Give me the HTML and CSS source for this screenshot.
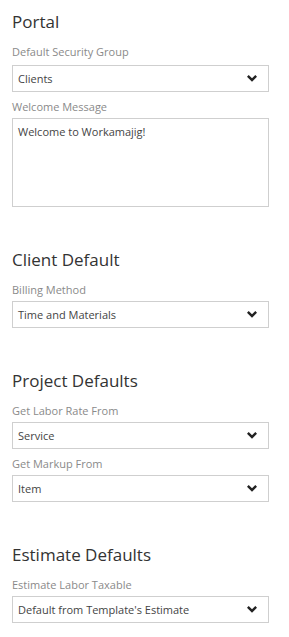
FILE: index.html
```html
<!DOCTYPE html>
<html lang="en">
<head>
  <meta charset="UTF-8">
  <meta name="viewport" content="width=device-width, initial-scale=1">
  <title>Settings</title>
  <link rel="stylesheet" href="styles.css">
</head>
<body>
  <!-- Portal -->
  <section class="group">
    <h2 class="group-title">Portal</h2>
    <label class="field-label field-label-first">Default Security Group</label>
    <div class="select">
      <span>Clients</span>
      <svg class="chevron" viewBox="0 0 10 7"><polygon points="0,1.7 1.7,0 5,3.3 8.3,0 10,1.7 5,6.7"/></svg>
    </div>
    <label class="field-label">Welcome Message</label>
    <div class="textarea">Welcome to Workamajig!</div>
  </section>

  <!-- Client Default -->
  <section class="group">
    <h2 class="group-title">Client Default</h2>
    <label class="field-label">Billing Method</label>
    <div class="select">
      <span>Time and Materials</span>
      <svg class="chevron" viewBox="0 0 10 7"><polygon points="0,1.7 1.7,0 5,3.3 8.3,0 10,1.7 5,6.7"/></svg>
    </div>
  </section>

  <!-- Project Defaults -->
  <section class="group">
    <h2 class="group-title">Project Defaults</h2>
    <label class="field-label">Get Labor Rate From</label>
    <div class="select">
      <span>Service</span>
      <svg class="chevron" viewBox="0 0 10 7"><polygon points="0,1.7 1.7,0 5,3.3 8.3,0 10,1.7 5,6.7"/></svg>
    </div>
    <label class="field-label">Get Markup From</label>
    <div class="select">
      <span>Item</span>
      <svg class="chevron" viewBox="0 0 10 7"><polygon points="0,1.7 1.7,0 5,3.3 8.3,0 10,1.7 5,6.7"/></svg>
    </div>
  </section>

  <!-- Estimate Defaults -->
  <section class="group">
    <h2 class="group-title">Estimate Defaults</h2>
    <label class="field-label">Estimate Labor Taxable</label>
    <div class="select">
      <span>Default from Template's Estimate</span>
      <svg class="chevron" viewBox="0 0 10 7"><polygon points="0,1.7 1.7,0 5,3.3 8.3,0 10,1.7 5,6.7"/></svg>
    </div>
  </section>
</body>
</html>
```

FILE: styles.css
```css
* {
  margin: 0;
  padding: 0;
  box-sizing: border-box;
}
body {
  font-family: "Open Sans", sans-serif;
  background: #fff;
  color: #444;
  padding: 11px 20px 0 12px;
}

/* Section */
.group {
  width: 257px;
}
.group + .group {
  margin-top: 42px;
}
.group-title {
  font-size: 17px;
  line-height: 22px;
  font-weight: 400;
  color: #333;
  margin-bottom: 11px;
}

/* Labels */
.field-label {
  display: block;
  font-size: 11px;
  line-height: 15px;
  color: #8a8a8a;
  margin-bottom: 4px;
}
.field-label-first {
  margin-bottom: 6px;
}

/* Dropdown */
.select {
  height: 27px;
  border: 1px solid #cfcfcf;
  display: flex;
  align-items: center;
  justify-content: space-between;
  padding: 0 11px 0 5px;
  font-size: 11px;
  color: #444;
  margin-bottom: 7px;
}
.select:last-child {
  margin-bottom: 0;
}
.chevron {
  width: 10px;
  height: 7px;
  fill: #222;
}

/* Text area */
.textarea {
  height: 89px;
  border: 1px solid #cfcfcf;
  padding: 5px 5px;
  font-size: 11px;
  line-height: 15px;
  color: #444;
}
```
